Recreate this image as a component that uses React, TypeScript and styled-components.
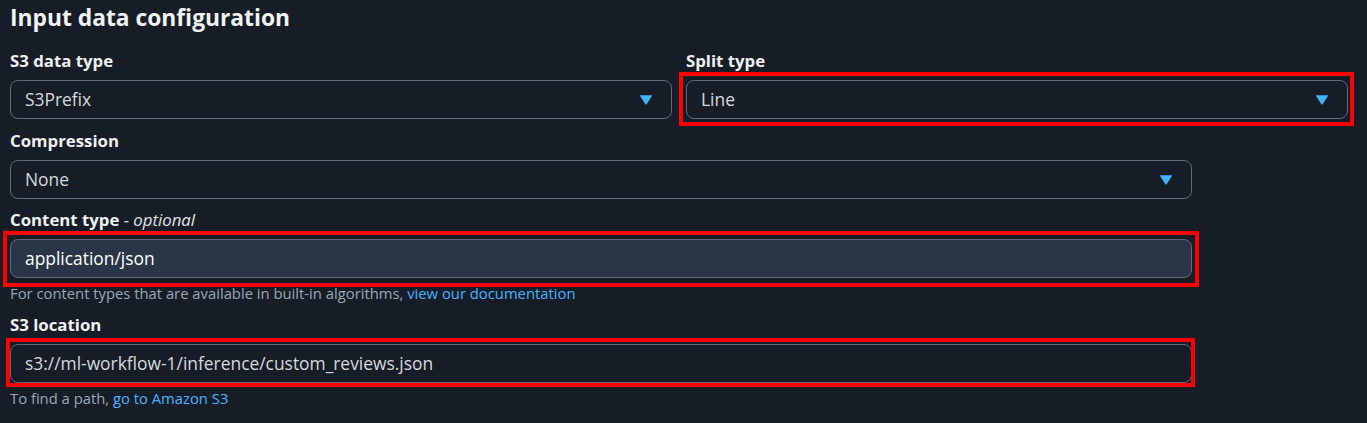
import * as React from 'react'
import styled, { createGlobalStyle } from 'styled-components'

const GlobalStyle = createGlobalStyle`
    html, body {
        margin: 0;
        padding: 0;
        background: #171d27;
    }
    body {
        font-family: "Open Sans", "Noto Sans", sans-serif;
        color: #e9ebed;
    }
`

const Page = styled.div`
    padding: 2px 10px 0 10px;
    width: 1338px;
`

const Title = styled.h2`
    margin: 0 0 16px 0;
    font-size: 22.8px;
    line-height: 32px;
    font-weight: 700;
    color: #f0f2f4;
`

const TwoCols = styled.div`
    display: grid;
    grid-template-columns: 1fr 1fr;
    column-gap: 14px;
`

const Field = styled.div<{ $wide?: boolean; $gap?: number }>`
    display: flex;
    flex-direction: column;
    width: ${p => (p.$wide ? '1182px' : 'auto')};
    margin-bottom: ${p => p.$gap ?? 11}px;
`

const Label = styled.label`
    font-size: 16.8px;
    line-height: 22px;
    font-weight: 700;
    color: #eef0f2;
    margin-bottom: 8px;

    i {
        font-weight: 400;
        color: #e0e3e6;
    }
`

const Highlight = styled.div<{ $t: number; $r: number; $b: number; $l: number }>`
    position: relative;

    &::after {
        content: '';
        position: absolute;
        top: ${p => -p.$t}px;
        right: ${p => -p.$r}px;
        bottom: ${p => -p.$b}px;
        left: ${p => -p.$l}px;
        border: 4px solid #ff0000;
        pointer-events: none;
    }
`

const Box = styled.div<{ $filled?: boolean }>`
    box-sizing: border-box;
    height: 39px;
    display: flex;
    align-items: center;
    justify-content: space-between;
    padding: 0 18px 1px 14px;
    border: 1px solid #5f6b7a;
    border-radius: 8px;
    background: ${p => (p.$filled ? '#2a3547' : 'transparent')};
    font-size: 17.4px;
    color: ${p => (p.$filled ? '#ffffff' : '#d5d9de')};
`

const Caret = styled.svg`
    width: 14px;
    height: 11px;
    flex-shrink: 0;
`

const Hint = styled.div`
    margin-top: 5px;
    font-size: 14.8px;
    line-height: 20px;
    color: #9ba7b6;

    a {
        color: #42b4ff;
        text-decoration: none;
    }
`

const Arrow = () => (
    <Caret viewBox="0 0 14 11">
        <path d="M1.5 1.2 L12.5 1.2 Q13.4 1.2 12.9 2 L7.8 10 Q7 11 6.2 10 L1.1 2 Q0.6 1.2 1.5 1.2 Z" fill="#42b4ff" />
    </Caret>
)

const Select = ({ value }: { value: string }) => (
    <Box>
        <span>{value}</span>
        <Arrow />
    </Box>
)

export default function App() {
    return (
        <>
            <GlobalStyle />
            <Page>
                <Title>Input data configuration</Title>
                <TwoCols>
                    <Field>
                        <Label>S3 data type</Label>
                        <Select value="S3Prefix" />
                    </Field>
                    <Field>
                        <Label>Split type</Label>
                        <Highlight $t={8} $r={6} $b={7} $l={7}>
                            <Select value="Line" />
                        </Highlight>
                    </Field>
                </TwoCols>
                <Field $wide $gap={10}>
                    <Label>Compression</Label>
                    <Select value="None" />
                </Field>
                <Field $wide $gap={11}>
                    <Label>Content type <i>- optional</i></Label>
                    <Highlight $t={8} $r={7} $b={9} $l={7}>
                        <Box $filled>application/json</Box>
                    </Highlight>
                    <Hint>
                        For content types that are available in built-in algorithms, <a href="#">view our documentation</a>
                    </Hint>
                </Field>
                <Field $wide>
                    <Label>S3 location</Label>
                    <Highlight $t={6} $r={3} $b={4} $l={4}>
                        <Box>s3://ml-workflow-1/inference/custom_reviews.json</Box>
                    </Highlight>
                    <Hint>
                        To find a path, <a href="#">go to Amazon S3</a>
                    </Hint>
                </Field>
            </Page>
        </>
    )
}
